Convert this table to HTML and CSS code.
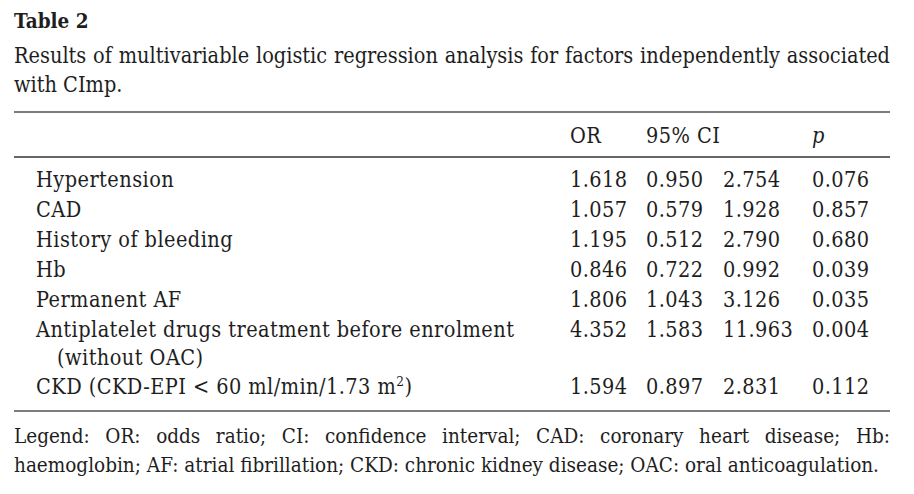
FILE: index.html
```html
<!DOCTYPE html>
<html lang="en">
<head>
<meta charset="utf-8">
<title>Table 2</title>
<link rel="stylesheet" href="styles.css">
</head>
<body>
<div class="figure">
  <div class="title">Table 2</div>
  <div class="caption">Results of multivariable logistic regression analysis for factors independently associated with CImp.</div>
  <table class="results">
    <colgroup>
      <col class="c-label">
      <col class="c-or">
      <col class="c-lo">
      <col class="c-hi">
      <col class="c-p">
    </colgroup>
    <thead>
      <tr>
        <th></th>
        <th>OR</th>
        <th colspan="2">95% CI</th>
        <th><i>p</i></th>
      </tr>
    </thead>
    <tbody>
      <tr class="first"><td class="label">Hypertension</td><td>1.618</td><td>0.950</td><td>2.754</td><td>0.076</td></tr>
      <tr><td class="label">CAD</td><td>1.057</td><td>0.579</td><td>1.928</td><td>0.857</td></tr>
      <tr><td class="label">History of bleeding</td><td>1.195</td><td>0.512</td><td>2.790</td><td>0.680</td></tr>
      <tr><td class="label">Hb</td><td>0.846</td><td>0.722</td><td>0.992</td><td>0.039</td></tr>
      <tr><td class="label">Permanent AF</td><td>1.806</td><td>1.043</td><td>3.126</td><td>0.035</td></tr>
      <tr><td class="label">Antiplatelet drugs treatment before enrolment (without OAC)</td><td>4.352</td><td>1.583</td><td>11.963</td><td>0.004</td></tr>
      <tr class="last"><td class="label">CKD (CKD-EPI &lt; 60 ml/min/1.73 m<sup>2</sup>)</td><td>1.594</td><td>0.897</td><td>2.831</td><td>0.112</td></tr>
    </tbody>
  </table>
  <p class="legend">Legend: OR: odds ratio; CI: confidence interval; CAD: coronary heart disease; Hb: haemoglobin; AF: atrial fibrillation; CKD: chronic kidney disease; OAC: oral anticoagulation.</p>
</div>
</body>
</html>
```

FILE: styles.css
```css
html, body {
  margin: 0;
  padding: 0;
  background: #ffffff;
}

body {
  font-family: "DejaVu Serif Condensed", "DejaVu Serif", "Liberation Serif", serif;
  font-stretch: semi-condensed;
  color: #1e1e1e;
}

.figure {
  width: 876px;
  padding: 8px 0 0 14px;
}

.title {
  font-weight: bold;
  font-size: 20.5px;
  line-height: 26px;
}

.caption {
  font-size: 21.5px;
  line-height: 29px;
  margin-top: 7px;
  text-align: justify;
}

.results {
  width: 876px;
  border-collapse: collapse;
  table-layout: fixed;
  margin-top: 12px;
  font-size: 21.5px;
  letter-spacing: 0.45px;
}

.c-label { width: 556px; }
.c-or { width: 76px; }
.c-lo { width: 77px; }
.c-hi { width: 89px; }
.c-p { width: 78px; }

.results thead tr {
  border-top: 2px solid #7c7c7c;
  border-bottom: 2px solid #666666;
}

.results th {
  font-weight: normal;
  text-align: left;
  padding: 2px 0 0 0;
  height: 41px;
  vertical-align: middle;
}

.results td {
  padding: 0;
  line-height: 30px;
  vertical-align: top;
  white-space: nowrap;
}

.results td.label {
  white-space: normal;
  line-height: 28px;
  padding-top: 1px;
  padding-left: 43px;
  padding-right: 40px;
  text-indent: -21px;
}

.results tr.first td {
  padding-top: 7px;
}

.results tr.first td.label {
  padding-top: 8px;
}

.results tr.last td {
  padding-bottom: 8px;
}

.results tbody tr.last {
  border-bottom: 2px solid #7c7c7c;
}

.results sup {
  font-size: 13.5px;
  line-height: 0;
  vertical-align: 8px;
}

.legend {
  margin: 10px 0 0 0;
  font-size: 20.5px;
  line-height: 29px;
  text-align: justify;
}
```
